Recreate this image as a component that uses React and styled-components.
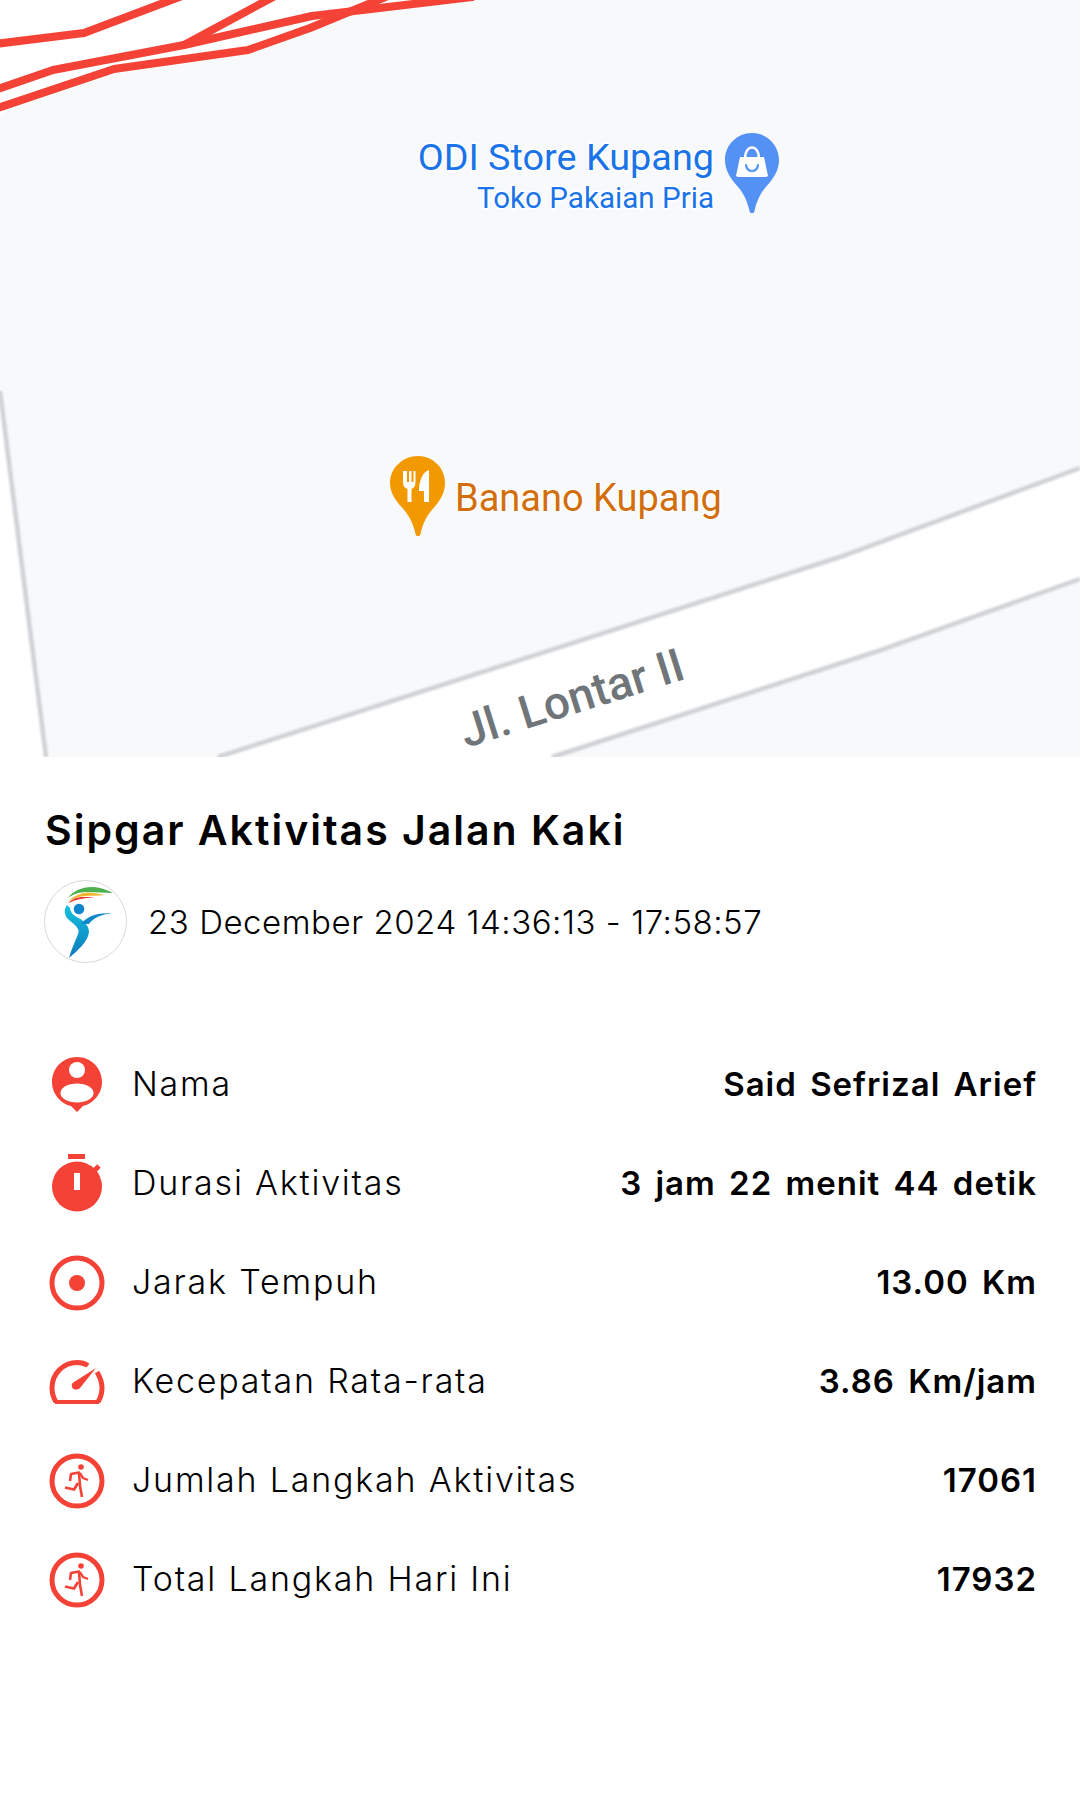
import React from "react";
import styled, { createGlobalStyle } from "styled-components";

const Global = createGlobalStyle`
  html, body { margin: 0; padding: 0; background: #fff; }
  * { box-sizing: border-box; }
`;
const Page = styled.div`
  width: 1080px; height: 1804px; background: #fff; overflow: hidden;
  font-family: Inter, "Liberation Sans", sans-serif; color: #000;
`;
const MapSvg = styled.svg`display: block; width: 1080px; height: 757px;`;
const Panel = styled.section`padding: 49px 44px 0 44px;`;
const Title = styled.h1`
  margin: 0 0 0 1px; font-size: 41px; line-height: 48px; font-weight: 600; letter-spacing: 2px; color: #000;
`;
const Meta = styled.div`display: flex; align-items: center; gap: 21px; margin-top: 26px; margin-bottom: 71px;`;
const LogoSvg = styled.svg`display: block; width: 83px; height: 83px; flex: none;`;
const DateText = styled.span`font-size: 33px; font-weight: 300; letter-spacing: 0.54px; line-height: 40px;`;
const Rows = styled.div`display: flex; flex-direction: column;`;
const Row = styled.div`display: flex; align-items: center; height: 99px;`;
const IconBox = styled.svg`display: block; width: 60px; height: 60px; flex: none; margin-left: 3px; color: #f44336;`;
const Label = styled.span`flex: 1; margin-left: 25px; font-size: 34px; font-weight: 300; letter-spacing: 1.8px;`;
const Value = styled.span`font-size: 33px; font-weight: 600; letter-spacing: 1px; word-spacing: 4px; margin-right: -1px; text-align: right;`;
const Red = "#f44336";

const MapLabel = ({ x, y, size, color, anchor, children }) => (
  <text x={x} y={y} fontFamily="Roboto, sans-serif" fontSize={size} fill={color} textAnchor={anchor}
    stroke="#fff" strokeWidth="3" paintOrder="stroke" strokeLinejoin="round">{children}</text>
);

const MapView = () => (
  <MapSvg viewBox="0 0 1080 757">
    <defs>
      <filter id="soft" x="-10%" y="-10%" width="120%" height="120%"><feGaussianBlur stdDeviation="1.2" /></filter>
    </defs>
    <rect width="1080" height="757" fill="#f8f9fa" />
    <path d="M0 114 L114 74 L248 54 L312 30 L385 0 L0 0 Z" fill="#fff" />
    <path d="M312 20 L472 -3 L300 -3 Z" fill="#fff" />
    <path d="M0 391 L46 757 L0 757 Z" fill="#fff" />
    <path d="M0 391 L46 757" fill="none" stroke="#cfd1d5" strokeWidth="4.5" filter="url(#soft)" />
    <path d="M1080 468 L840 557 L218 757 L552 757 L875 652 L1080 579 Z" fill="#fff" />
    <path d="M1080 468 L840 557 L218 757" fill="none" stroke="#cfd1d5" strokeWidth="4.5" filter="url(#soft)" />
    <path d="M1080 579 L875 652 L552 757" fill="none" stroke="#cfd1d5" strokeWidth="4.5" filter="url(#soft)" />
    <g fill="none" stroke={Red} strokeWidth="8" strokeLinejoin="round" strokeLinecap="round">
      <path d="M-5 44 L84 33 L182 -4" />
      <path d="M-5 90 L53 70 L184 45 L275 -4" />
      <path d="M184 45 L312 16 L472 -3" />
      <path d="M-5 109 L114 69 L248 50 L310 28 L388 -4" />
    </g>
    <MapLabel x="714" y="170" size="37.8" color="#1a73e8" anchor="end">ODI Store Kupang</MapLabel>
    <MapLabel x="714" y="208" size="29.6" color="#1a73e8" anchor="end">Toko Pakaian Pria</MapLabel>
    <path d="M752 133 C767 133 779 145 779 160 C779 172 772 180 765 188 C760 194 756 203 754.5 211 C754 214 750 214 749.5 211 C748 203 744 194 739 188 C732 180 725 172 725 160 C725 145 737 133 752 133 Z" fill="#5491f5" />
    <path d="M738 177 L766 177 L768 176 L764 157 L740 157 L736 176 Z" fill="#fff" />
    <path d="M745 158 C745 144 759 144 759 158" fill="none" stroke="#fff" strokeWidth="2.5" />
    <path d="M746 165 C747 173 757 173 758 165" fill="none" stroke="#5491f5" strokeWidth="2.2" strokeLinecap="round" />
    <path d="M418 456 C433 456 445 468 445 483 C445 495 438 503 431 511 C426 517 422 526 420.5 534 C420 537 416 537 415.5 534 C414 526 410 517 405 511 C398 503 390 495 390 483 C390 468 403 456 418 456 Z" fill="#f29900" />
    <path d="M403 471 L403 482 C403 486 405 488 407.5 489 L407.5 502 L411.5 502 L411.5 489 C414 488 415.5 486 415.5 482 L415.5 471 L413.5 471 L413.5 482 L411.5 482 L411.5 471 L409 471 L409 482 L407 482 L407 471 L405 471 Z" fill="#fff" />
    <path d="M424 471 L424 502 L429 502 L429 470 C423 472 419 480 419 491 L424 491 Z" fill="#fff" />
    <MapLabel x="455" y="511" size="38" color="#d26e0c" anchor="start">Banano Kupang</MapLabel>
    <g transform="translate(466 748) rotate(-17.5)">
      <text fontFamily="Roboto, sans-serif" fontWeight="500" fontSize="46" fill="#70757a">Jl. Lontar II</text>
    </g>
  </MapSvg>
);

const Logo = () => (
  <LogoSvg viewBox="0 0 83 83">
    <defs>
      <linearGradient id="logoBody" x1="0" y1="0" x2="0" y2="1">
        <stop offset="0" stopColor="#14c3dc" />
        <stop offset="1" stopColor="#0d78bd" />
      </linearGradient>
    </defs>
    <circle cx="41.5" cy="41.5" r="41" fill="#fff" stroke="#d8d8d8" strokeWidth="1" />
    <path d="M24 18 C30 9 44 5 56 8 C61 9 65 11 69 13 C60 13 52 12 43 12 C36 12 29 14 24 18 Z" fill="#4caf50" />
    <path d="M24 22 C29 16 36 13 44 12.5 C50 13 56 14 61 15 C53 16 47 15.5 42 16 C35 16 29 18 24 22 Z" fill="#f2b632" />
    <path d="M24 23.5 C28 19 33 17 39 17 C43 17 47 17 51 17.5 C45 18 40 18 37 19 C32 20 28 21 24 23.5 Z" fill="#e5392f" />
    <circle cx="35" cy="29" r="5.3" fill="#0f86c9" />
    <path d="M23 25 C20 29 20 34 23 38 C29 44 37 48 34 54 C31 62 27 70 25 78 C33 71 44 62 45 52 C45 46 41 43 38 40 C33 37 26 34 26 28 Z" fill="url(#logoBody)" />
    <path d="M37 44 C42 37 53 32 68 33.5 C59 34 50 37 45 44 Z" fill="#0f8ac8" />
  </LogoSvg>
);

const PersonIcon = () => (
  <IconBox viewBox="0 0 60 60">
    <path d="M30 3 C44 3 55 14 55 28 C55 41 45 50 36 52 L30 58 L24 52 C15 50 5 41 5 28 C5 14 16 3 30 3 Z" fill="currentColor" />
    <circle cx="30" cy="16" r="8" fill="#fff" />
    <ellipse cx="30" cy="39" rx="16.5" ry="9.5" fill="#fff" />
  </IconBox>
);
const TimerIcon = () => (
  <IconBox viewBox="0 0 60 60">
    <rect x="21" y="1" width="17" height="5" fill="currentColor" />
    <circle cx="30" cy="33.5" r="25" fill="currentColor" />
    <path d="M46 19 L52 13" stroke="currentColor" strokeWidth="5" />
    <rect x="27" y="20" width="6" height="17" fill="#fff" />
  </IconBox>
);
const TargetIcon = () => (
  <IconBox viewBox="0 0 60 60">
    <circle cx="30" cy="31" r="25" fill="none" stroke="currentColor" strokeWidth="5" />
    <circle cx="30" cy="31" r="8" fill="currentColor" />
  </IconBox>
);
const GaugeIcon = () => (
  <IconBox viewBox="0 0 60 60">
    <path d="M9 51 C6 46 5 42 5 37 C5 22 17 11.5 30 11.5 C34 11.5 38 12.5 41 14.5" fill="none" stroke="currentColor" strokeWidth="5" />
    <path d="M50 21 C53 26 55 31 55 37 C55 42 54 46 51 51" fill="none" stroke="currentColor" strokeWidth="5" />
    <path d="M8 51 L52 51" stroke="currentColor" strokeWidth="4" />
    <path d="M49 17 L33 37 C31 39 27 39 25.5 37 C24 34 25 32 27 31 Z" fill="currentColor" />
  </IconBox>
);
const RunnerIcon = () => (
  <IconBox viewBox="0 0 60 60">
    <circle cx="30" cy="31" r="25" fill="none" stroke="currentColor" strokeWidth="5" />
    <circle cx="34" cy="17" r="2.8" fill="currentColor" />
    <g fill="none" stroke="currentColor" strokeWidth="2.8" strokeLinejoin="round">
      <path d="M23 31 L24 24 L32 22.5 L33 36 L35 47" strokeWidth="2.6" />
      <path d="M33 23 L36 28 L41 30" strokeWidth="2.4" />
      <path d="M31 33 L27 39.5 L18 37.5" />
    </g>
  </IconBox>
);

const rows = [
  [PersonIcon, "Nama", "Said Sefrizal Arief"],
  [TimerIcon, "Durasi Aktivitas", "3 jam 22 menit 44 detik"],
  [TargetIcon, "Jarak Tempuh", "13.00 Km"],
  [GaugeIcon, "Kecepatan Rata-rata", "3.86 Km/jam"],
  [RunnerIcon, "Jumlah Langkah Aktivitas", "17061"],
  [RunnerIcon, "Total Langkah Hari Ini", "17932"],
];

export default function App() {
  return (
    <Page>
      <Global />
      <MapView />
      <Panel>
        <Title>Sipgar Aktivitas Jalan Kaki</Title>
        <Meta>
          <Logo />
          <DateText>23 December 2024 14:36:13 - 17:58:57</DateText>
        </Meta>
        <Rows>
          {rows.map(([Icon, label, value]) => (
            <Row key={label}>
              <Icon />
              <Label>{label}</Label>
              <Value>{value}</Value>
            </Row>
          ))}
        </Rows>
      </Panel>
    </Page>
  );
}
